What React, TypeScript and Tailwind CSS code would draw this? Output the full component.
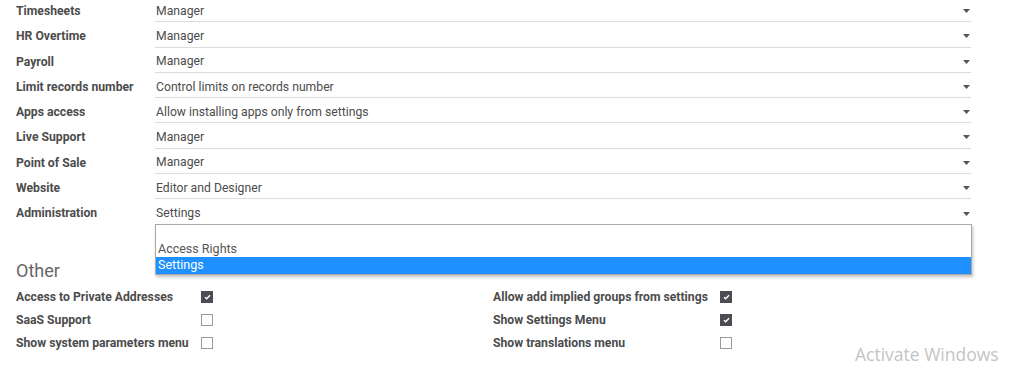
const rows: [string, string][] = [
  ["Timesheets", "Manager"],
  ["HR Overtime", "Manager"],
  ["Payroll", "Manager"],
  ["Limit records number", "Control limits on records number"],
  ["Apps access", "Allow installing apps only from settings"],
  ["Live Support", "Manager"],
  ["Point of Sale", "Manager"],
  ["Website", "Editor and Designer"],
  ["Administration", "Settings"],
];

const leftChecks: [string, boolean][] = [
  ["Access to Private Addresses", true],
  ["SaaS Support", false],
  ["Show system parameters menu", false],
];

const rightChecks: [string, boolean][] = [
  ["Allow add implied groups from settings", true],
  ["Show Settings Menu", true],
  ["Show translations menu", false],
];

function Caret() {
  return (
    <svg width="7" height="4" viewBox="0 0 7 4" className="shrink-0">
      <path d="M0 0h7L3.5 4z" fill="#555" />
    </svg>
  );
}

function Checkbox({ checked }: { checked: boolean }) {
  if (checked) {
    return (
      <span className="flex h-[12px] w-[12px] shrink-0 items-center justify-center bg-[#4c4c55]">
        <svg width="7" height="6" viewBox="0 0 7 6">
          <path d="M1 3.2l1.7 1.6L6 1.2" stroke="#fff" strokeWidth="1.4" fill="none" />
        </svg>
      </span>
    );
  }
  return <span className="block h-[12px] w-[12px] shrink-0 border border-[#9a9a9a] bg-white" />;
}

function CheckColumn({ items, labelW }: { items: [string, boolean][]; labelW: string }) {
  return (
    <div className="flex flex-col">
      {items.map(([label, checked]) => (
        <div key={label} className="flex h-[23px] items-center">
          <div className={`${labelW} whitespace-nowrap font-bold text-[#4c4c4c]`}>{label}</div>
          <Checkbox checked={checked} />
        </div>
      ))}
    </div>
  );
}

export default function App() {
  return (
    <div className="relative h-[366px] w-[1024px] overflow-hidden bg-white text-[12.2px] text-[#4c4c4c] [font-family:Roboto,'Liberation_Sans',sans-serif]">
      <div className="mt-[-3px] pl-[16px]">
        {/* Access rights rows */}
        <div className="flex flex-col">
          {rows.map(([label, value], i) => (
            <div key={label} className="relative flex h-[25.25px]">
              <div className="w-[139px] whitespace-nowrap pt-[5px] font-bold">{label}</div>
              <div
                className={`flex w-[816px] items-center justify-between pr-[1px] pt-[4px] ${
                  i < rows.length - 1 ? "border-b border-[#dcdcdc]" : ""
                }`}
              >
                <span className="pl-[1px]">{value}</span>
                <Caret />
              </div>
              {i === rows.length - 1 && (
                <div className="absolute left-[139px] top-[25px] z-10 w-[817px] border border-[#a9a9a9] bg-white text-[12.5px] shadow-[1px_2px_3px_rgba(0,0,0,0.25)]">
                  <div className="h-[16px]" />
                  <div className="flex h-[16px] items-center pl-[2px] text-[#555]">Access Rights</div>
                  <div className="flex h-[17px] items-center bg-[#1e90ff] pl-[2px] text-white">Settings</div>
                </div>
              )}
            </div>
          ))}
        </div>

        {/* Other section */}
        <div className="mt-[36px] text-[18px] leading-[22px] text-[#666]">Other</div>
        <div className="mt-[3px] flex">
          <div className="w-[477px]">
            <CheckColumn items={leftChecks} labelW="w-[185px]" />
          </div>
          <CheckColumn items={rightChecks} labelW="w-[227px]" />
        </div>
      </div>

      <div className="absolute bottom-[-1px] left-[855px] text-[17.5px] text-[#c4c4c4] [font-family:'Open_Sans',sans-serif]">
        Activate Windows
      </div>
    </div>
  );
}
